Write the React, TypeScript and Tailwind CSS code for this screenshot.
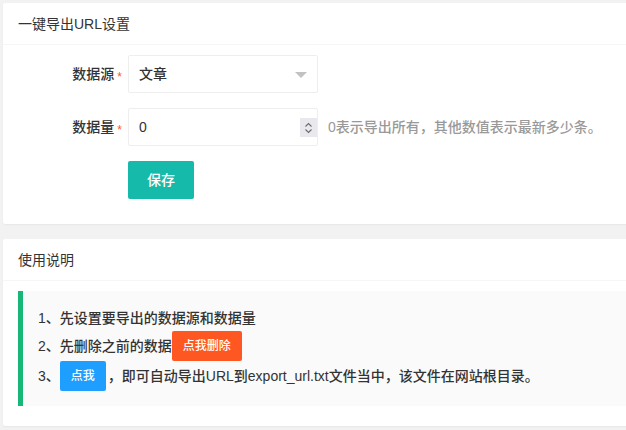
import { useState } from "react";

const font = "font-['Liberation_Sans','Noto_Sans_CJK_SC',sans-serif]";

function Card({ title, children }: { title: string; children: React.ReactNode }) {
  return (
    <div className="bg-white rounded-[2px] shadow-[0_1px_2px_0_rgba(0,0,0,0.05)]">
      <div className="h-[42px] leading-[42px] px-[15px] border-b border-[#f6f6f6] text-[14px] text-[#333]">
        {title}
      </div>
      <div className="px-[15px] py-[10px]">{children}</div>
    </div>
  );
}

function Label({ text }: { text: string }) {
  return (
    <label className="w-[110px] shrink-0 flex items-center justify-end pr-[6px] text-[14px] text-[#333] font-medium">
      {text}
      <span className="text-[#ff5722] ml-[3px] text-[12px] leading-none mt-[5px]">*</span>
    </label>
  );
}

export default function App() {
  const [count, setCount] = useState("0");

  return (
    <div className={`h-[430px] overflow-hidden bg-[#f2f2f2] pl-[3px] pt-[3px] ${font}`}>
      <div className="w-[660px]">
        <Card title="一键导出URL设置">
          <div className="flex flex-col gap-[15px] pb-[15px]">
            {/* 数据源 */}
            <div className="flex items-center">
              <Label text="数据源" />
              <div className="relative w-[190px] h-[38px] border border-[#eee] rounded-[2px] bg-white px-[10px] flex items-center text-[14px] text-[#333] font-medium">
                文章
                <span className="absolute right-[10px] top-[16px] w-0 h-0 border-l-[6px] border-r-[6px] border-t-[6px] border-l-transparent border-r-transparent border-t-[#c2c2c2]" />
              </div>
            </div>

            {/* 数据量 */}
            <div className="flex items-center">
              <Label text="数据量" />
              <div className="relative w-[190px] h-[38px] border border-[#eee] rounded-[2px] bg-white flex items-center">
                <input
                  value={count}
                  onChange={(e) => setCount(e.target.value)}
                  className="w-full h-full px-[10px] outline-none text-[14px] text-[#333] bg-transparent"
                />
                <div className="absolute right-0 top-[9px] w-[17px] h-[19px] bg-[#e9e9ed] flex flex-col items-center justify-center">
                  <svg width="9" height="14" viewBox="0 0 9 14" fill="none" stroke="#6b6b6b" strokeWidth="1.1">
                    <path d="M1.5 5.5 L4.5 2.5 L7.5 5.5" />
                    <path d="M1.5 8.5 L4.5 11.5 L7.5 8.5" />
                  </svg>
                </div>
              </div>
              <div className="pl-[10px] text-[14px] text-[#999] font-medium">
                0表示导出所有，其他数值表示最新多少条。
              </div>
            </div>

            {/* 保存 */}
            <div className="flex">
              <div className="w-[110px] shrink-0" />
              <button className="h-[38px] w-[66px] bg-[#16baaa] text-white text-[14px] font-medium rounded-[2px]">
                保存
              </button>
            </div>
          </div>
        </Card>

        <div className="h-[15px]" />

        <Card title="使用说明">
          <div className="mb-[10px] border-l-[5px] border-[#16b777] bg-[#fafafa] p-[15px] text-[14px] text-[#333] font-medium">
            <div className="h-[25px] leading-[25px]">1、先设置要导出的数据源和数据量</div>
            <div className="h-[30px] flex items-center">
              2、先删除之前的数据
              <button className="h-[30px] w-[70px] bg-[#ff5722] text-white text-[12px] rounded-[2px]">
                点我删除
              </button>
            </div>
            <div className="h-[30px] flex items-center">
              3、
              <button className="h-[30px] w-[46px] bg-[#1e9fff] text-white text-[12px] rounded-[2px]">
                点我
              </button>
              <span className="ml-[2px]">
                ，即可自动导出<span className="font-normal">URL</span>到
                <span className="font-normal">export_url.txt</span>文件当中，该文件在网站根目录。
              </span>
            </div>
          </div>
        </Card>
      </div>
    </div>
  );
}
